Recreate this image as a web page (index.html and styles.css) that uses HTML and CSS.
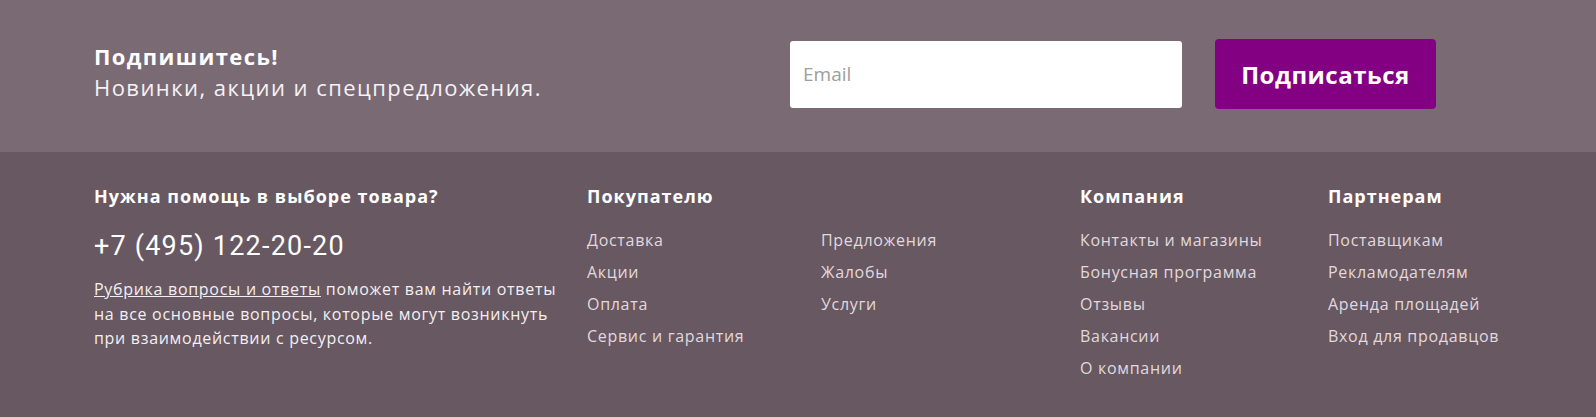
FILE: index.html
```html
<!DOCTYPE html>
<html lang="ru">
<head>
<meta charset="utf-8">
<link rel="stylesheet" href="styles.css">
</head>
<body>
<div class="subscribe">
  <div class="wrap sub-row">
    <div class="sub-text">
      <div class="sub-title">Подпишитесь!</div>
      <div class="sub-desc">Новинки, акции и спецпредложения.</div>
    </div>
    <div class="sub-form">
      <div class="email">Email</div>
      <div class="btn">Подписаться</div>
    </div>
  </div>
</div>
<div class="footer">
  <div class="wrap foot-grid">
    <div class="col help">
      <div class="head">Нужна помощь в выборе товара?</div>
      <div class="phone">+7 (495) 122-20-20</div>
      <p class="help-text"><span class="u">Рубрика вопросы и ответы</span> поможет вам найти ответы на все основные вопросы, которые могут возникнуть при взаимодействии с ресурсом.</p>
    </div>
    <div class="col">
      <div class="head">Покупателю</div>
      <div class="split">
        <ul class="links">
          <li>Доставка</li>
          <li>Акции</li>
          <li>Оплата</li>
          <li>Сервис и гарантия</li>
        </ul>
        <ul class="links">
          <li>Предложения</li>
          <li>Жалобы</li>
          <li>Услуги</li>
        </ul>
      </div>
    </div>
    <div class="col">
      <div class="head">Компания</div>
      <ul class="links">
        <li>Контакты и магазины</li>
        <li>Бонусная программа</li>
        <li>Отзывы</li>
        <li>Вакансии</li>
        <li>О компании</li>
      </ul>
    </div>
    <div class="col">
      <div class="head">Партнерам</div>
      <ul class="links">
        <li>Поставщикам</li>
        <li>Рекламодателям</li>
        <li>Аренда площадей</li>
        <li>Вход для продавцов</li>
      </ul>
    </div>
  </div>
</div>
</body>
</html>
```

FILE: styles.css
```css
* { box-sizing: border-box; }
html, body { margin: 0; padding: 0; }
body {
  font-family: "Open Sans", "Noto Sans", sans-serif;
  background: #675861;
  color: #fff;
  height: 417px;
  overflow: hidden;
}
.wrap {
  width: 1410px;
  margin: 0 auto;
  padding-left: 1px;
}
.subscribe {
  background: #7a6a74;
  height: 152px;
}
.sub-row {
  display: flex;
  align-items: flex-start;
  padding-top: 39px;
}
.sub-text { width: 696px; padding-top: 2px; }
.sub-title {
  font-size: 22px;
  font-weight: 700;
  line-height: 30px;
  letter-spacing: 1.4px;
}
.sub-desc {
  font-size: 22px;
  line-height: 32px;
  letter-spacing: 1.45px;
  color: #f6f2f5;
}
.sub-form {
  display: flex;
  align-items: center;
  gap: 33px;
}
.email {
  width: 392px;
  height: 67px;
  background: #fff;
  border-radius: 3px;
  color: #9d9d9d;
  font-size: 19px;
  padding-left: 13px;
  display: flex;
  align-items: center;
}
.btn {
  width: 221px;
  height: 70px;
  background: #830083;
  border-radius: 4px;
  color: #fff;
  font-size: 24px;
  font-weight: 700;
  letter-spacing: 0.5px;
  display: flex;
  align-items: center;
  justify-content: center;
}
.footer { padding-top: 32px; }
.foot-grid {
  display: grid;
  grid-template-columns: 493px 493px 248px 1fr;
}
.head {
  font-size: 18px;
  font-weight: 700;
  line-height: 24px;
  letter-spacing: 1px;
  margin-bottom: 16px;
}
.phone {
  font-family: Roboto, sans-serif;
  font-size: 27px;
  line-height: 44px;
  letter-spacing: 1.2px;
  margin-bottom: 9px;
}
.help-text {
  margin: 0;
  font-size: 16px;
  line-height: 24.5px;
  letter-spacing: 0.7px;
  width: 475px;
  color: #f4eff2;
}
.u { text-decoration: underline; }
.split { display: flex; }
.split .links { width: 234px; }
.links {
  list-style: none;
  margin: 0;
  padding: 0;
}
.links li {
  font-size: 16px;
  line-height: 32px;
  letter-spacing: 0.7px;
  color: #e2d9de;
}
```
